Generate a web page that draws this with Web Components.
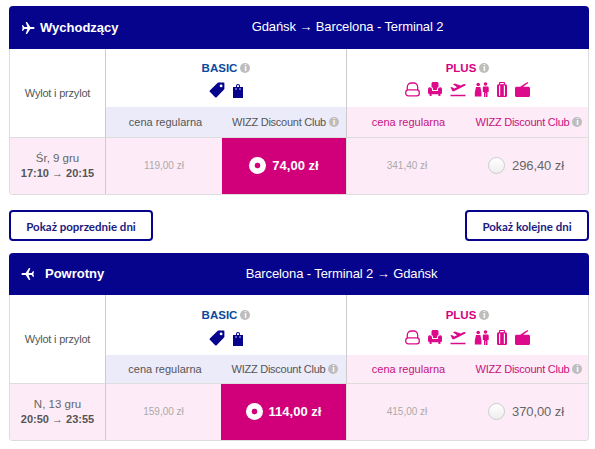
<!DOCTYPE html>
<html lang="pl">
<head>
<meta charset="utf-8">
<title>Wybór lotu</title>
<style>
  html, body { margin: 0; background: #fff; }
  body { font-family: "Liberation Sans", Arial, sans-serif; }
  main { display: flex; flex-direction: column; width: 580px; padding: 6px 0 0 9px; }
</style>
</head>
<body>
<main>
  <flight-card direction="out" label="Wychodzący" route="Gdańsk → Barcelona - Terminal 2"
    day="Śr, 9 gru" times="17:10 → 20:15"
    basic-reg="119,00 zł" basic-club="74,00 zł" plus-reg="341,40 zł" plus-club="296,40 zł"
    style="--head:43px; --plan:58px; --sub:31px; --reg:116px; --club:124px; --plan-pad:12px; --icon-top:7px; --route-pad:97px"></flight-card>
  <day-pager></day-pager>
  <flight-card direction="back" label="Powrotny" route="Barcelona - Terminal 2 → Gdańsk"
    day="N, 13 gru" times="20:50 → 23:55"
    basic-reg="159,00 zł" basic-club="114,00 zł" plus-reg="415,00 zł" plus-club="370,00 zł"
    style="--head:42px; --plan:60px; --sub:29px; --reg:115px; --club:125px; --plan-pad:13px; --icon-top:8px; --route-pad:85px"></flight-card>
</main>

<script>
const ICONS = {
  plane: [20, 20, '<path d="M19.5 10c0-1-1.2-1.6-2.6-1.6h-3.6L8.6 1.5H6.7l2.4 6.9H4.8L3 6H1.3l1 4-1 4H3l1.8-2.4h4.3l-2.4 6.9h1.9l4.7-6.9h3.6c1.4 0 2.6-.6 2.6-1.6z"/>'],
  tag: [16, 16, '<path fill-rule="evenodd" d="M9.5.6h5.2c.4 0 .7.3.7.7v5.2c0 .4-.1.7-.4 1l-7.4 7.7c-.4.4-1 .4-1.4 0L.8 9.8c-.4-.4-.4-1 0-1.4L8.5 1c.3-.3.6-.4 1-.4zm2.6 1.9a1.4 1.4 0 1 0 0 2.8 1.4 1.4 0 0 0 0-2.8z"/>'],
  bag: [10, 15, '<path fill-rule="evenodd" d="M3 4V3a2 2 0 0 1 4 0v1h3v11H0V4zM4 4h2V3a1 1 0 0 0-2 0zM2.5 5.2v1.6h1V5.2zm4 0v1.6h1V5.2z"/>'],
  seat: [15, 15, '<path fill="none" stroke="currentColor" stroke-width="1.3" d="M2.3 8V5.2C2.3 2.900 4 1 6.300 1h2.400c2.300 0 4 1.900 4 4.200V8"/><rect x=".7" y="7.800" width="13.600" height="6" rx="2.600" fill="none" stroke="currentColor" stroke-width="1.300"/>'],
  chair: [14, 15, '<path d="M3.5 1.5C3.5.7 4.2 0 5 0h4c.8 0 1.500.7 1.500 1.500V5c-.9.2-1.500 1-1.500 2v1H5V7c0-1-.6-1.800-1.500-2z"/><path d="M1.700 5.200C2.800 5.200 4 6 4 7.300V9h6V7.300c0-1.300 1.200-2.100 2.300-2.100S14 6 14 7.200v3.300c0 1-.7 1.700-1.600 1.700V14h-2v-1.800H3.600V14h-2v-1.800C.7 12.200 0 11.500 0 10.500V7.200C0 6 .7 5.200 1.700 5.200z"/>'],
  takeoff: [16, 15, '<path d="M.5 5.500l1.300-.6 2.500 1.500 2.700-1.200L3 2.300l1.700-.7 6 1.800 2.700-1.200c.8-.3 1.800-.3 2.100.3.2.6-.3 1.200-1.100 1.600L4 9.200c-.6.3-1.200.2-1.600-.2zM.5 12.800h15v1.400H.5z"/>'],
  people: [15, 15, '<circle cx="4.200" cy="2.500" r="1.800"/><circle cx="11.500" cy="2" r="1.800"/><path d="M2 5h4.400l1.100 5.400v4H.8v-4zM9.500 4.500h4c.7 0 1.200.5 1.200 1.200V10h-1.200v5h-1.500v-4h-.5v4H10v-5H8.800V5.700c0-.7.3-1.200.7-1.200z"/>'],
  suitcase: [10, 15, '<path fill-rule="evenodd" d="M3 0h4c.6 0 1 .4 1 1v1.300h.4c.9 0 1.600.7 1.600 1.600v9.500c0 .9-.7 1.600-1.600 1.600H1.600C.7 15 0 14.300 0 13.400V3.900c0-.9.7-1.600 1.600-1.600H2V1c0-.6.4-1 1-1zm.2 1v1.300h3.600V1zM2 3.500v10.300h1.200V3.500zm4.800 0v10.300H8V3.500z"/>'],
  handbag: [15, 15, '<path d="M1.500 4.700h3.700L10 1.600 12.800.1l.5.8L10.500 3 8 4.700h5.500c.8 0 1.500.7 1.500 1.500v7.300c0 .8-.7 1.500-1.500 1.500h-12C.7 15 0 14.300 0 13.500V6.200c0-.8.7-1.500 1.500-1.500z"/>'],
};

class FareIcon extends HTMLElement {
  constructor() {
    super();
    this.attachShadow({ mode: 'open' });
  }

  connectedCallback() {
    const [w, h, body] = ICONS[this.getAttribute('name')];
    const size = this.getAttribute('size');
    this.shadowRoot.innerHTML = `
      <style>
        :host { display: block; line-height: 0; }
        svg { display: block; width: ${size || w}px; height: ${size || h}px; fill: currentColor; }
      </style>
      <svg viewBox="0 0 ${w} ${h}" aria-hidden="true">${body}</svg>`;
  }
}

class InfoDot extends HTMLElement {
  constructor() {
    super();
    this.attachShadow({ mode: 'open' });
    this.shadowRoot.innerHTML = `
      <style>
        :host {
          display: inline-block;
          flex: none;
          width: 10px;
          height: 10px;
          border-radius: 50%;
          background: #bdbdbd;
          color: #fff;
          font: bold 9px/10px "Liberation Sans", Arial, sans-serif;
          letter-spacing: 0;
          text-align: center;
        }
      </style>i`;
  }
}

class PlanHead extends HTMLElement {
  constructor() {
    super();
    this.attachShadow({ mode: 'open' });
  }

  connectedCallback() {
    this.shadowRoot.innerHTML = `
      <style>
        :host {
          display: flex;
          flex-direction: column;
          align-items: center;
          background: #fff;
          color: var(--plan-color);
          padding-top: var(--plan-pad);
          box-sizing: border-box;
        }
        .name { font: bold 11.5px/14px "Liberation Sans", Arial, sans-serif; color: var(--name-color); display: flex; align-items: center; gap: 3px; }
        .icons { display: flex; align-items: center; gap: 8px; margin-top: var(--icon-top); }
      </style>
      <div class="name">${this.getAttribute('name')} <info-dot></info-dot></div>
      <div class="icons"><slot></slot></div>`;
  }
}

class FareCell extends HTMLElement {
  constructor() {
    super();
    this.attachShadow({ mode: 'open' });
  }

  connectedCallback() {
    const kind = this.getAttribute('kind');
    const radio = kind === 'price' ? '' : `<span class="radio"></span>`;
    this.shadowRoot.innerHTML = `
      <style>
        :host {
          display: flex;
          align-items: center;
          justify-content: center;
          gap: 7px;
          background: #fdecf7;
          font-family: "Liberation Sans", Arial, sans-serif;
          padding-bottom: 1px;
          box-sizing: border-box;
          height: 100%;
        }
        :host([kind="price"]) { font-size: 10px; color: #aaa; }
        :host([kind="option"]) { font-size: 13px; color: #666; padding-right: 3px; letter-spacing: -.1px; }
        :host([kind="selected"]) { background: #d1007a; color: #fff; font-size: 13px; font-weight: bold; gap: 6px; }
        .radio {
          width: 17px;
          height: 17px;
          border-radius: 50%;
          box-sizing: border-box;
          border: 1px solid #ccc;
          background: linear-gradient(#fff, #eee);
        }
        :host([kind="selected"]) .radio {
          border: 0;
          background: radial-gradient(circle, #d1007a 0 2.5px, #fff 3.2px);
        }
      </style>
      ${radio}<span><slot></slot></span>`;
  }
}

class FlightCard extends HTMLElement {
  constructor() {
    super();
    this.attachShadow({ mode: 'open' });
  }

  connectedCallback() {
    const a = (n) => this.getAttribute(n);
    const back = a('direction') === 'back';
    this.shadowRoot.innerHTML = `
      <style>
        :host {
          display: block;
          font-family: "Liberation Sans", Arial, sans-serif;
          color: #666;
        }
        .head {
          display: flex;
          align-items: center;
          position: relative;
          height: var(--head);
          background: #06038d;
          color: #fff;
          border-radius: 4px 4px 0 0;
        }
        .dir {
          display: flex;
          align-items: center;
          margin-left: 12px;
          font: bold 13px/16px "Liberation Sans", Arial, sans-serif;
          white-space: nowrap;
        }
        .dir fare-icon { margin-right: ${back ? '10px' : '5px'}; ${back ? 'transform: scaleX(-1);' : ''} }
        .route { position: absolute; left: 0; right: 0; text-align: center; font-size: 13px; letter-spacing: -.1px; padding-left: var(--route-pad); padding-bottom: 2px; }
        .body {
          display: grid;
          grid-template-columns: 96px var(--reg) var(--club) 1fr 1fr;
          grid-template-rows: var(--plan) var(--sub) 56px;
          border: 1px solid #ddd;
          border-top: 0;
          border-radius: 0 0 4px 4px;
          overflow: hidden;
        }
        .side {
          grid-row: span 2;
          display: flex;
          align-items: center;
          justify-content: center;
          font-size: 11px;
          letter-spacing: -.2px;
          color: #555;
          border-right: 1px solid #ccc;
          padding-bottom: 1px;
        }
        plan-head { grid-column: span 2; }
        .basic { --plan-color: #06038d; --name-color: #0a4a9c; }
        .plus { --plan-color: #dd0a8c; --name-color: #d6007f; border-left: 1px solid #ccc; }
        .sub {
          display: flex;
          align-items: center;
          justify-content: center;
          gap: 3px;
          font-size: 11px;
          white-space: nowrap;
          padding: 0 0 1px 3px;
          border-bottom: 1px solid #ddd;
        }
        .club { letter-spacing: -.25px; }
        .lav { background: #ecebfa; color: #555; }
        .rose { background: #fdecf7; color: #c8107f; }
        .edge { border-left: 1px solid #ccc; }
        .when {
          display: flex;
          flex-direction: column;
          justify-content: center;
          align-items: center;
          background: #fdecf7;
          font-size: 11.5px;
          line-height: 15px;
          padding-bottom: 1px;
          border-right: 1px solid #ccc;
          border-top: 1px solid #ddd;
          margin-top: -1px;
        }
        .when b { color: #555; font-size: 11px; }
      </style>
      <div class="head">
        <div class="dir"><fare-icon name="plane" size="14"></fare-icon>${a('label')}</div>
        <div class="route">${a('route')}</div>
      </div>
      <div class="body">
        <div class="side">Wylot i przylot</div>
        <plan-head class="basic" name="BASIC">
          <fare-icon name="tag"></fare-icon><fare-icon name="bag"></fare-icon>
        </plan-head>
        <plan-head class="plus" name="PLUS">
          <fare-icon name="seat"></fare-icon><fare-icon name="chair"></fare-icon>
          <fare-icon name="takeoff"></fare-icon><fare-icon name="people"></fare-icon>
          <fare-icon name="suitcase"></fare-icon><fare-icon name="handbag"></fare-icon>
        </plan-head>
        <div class="sub lav">cena regularna</div>
        <div class="sub lav club">WIZZ Discount Club <info-dot></info-dot></div>
        <div class="sub rose edge">cena regularna</div>
        <div class="sub rose club">WIZZ Discount Club <info-dot></info-dot></div>
        <div class="when"><span>${a('day')}</span><b>${a('times')}</b></div>
        <fare-cell kind="price">${a('basic-reg')}</fare-cell>
        <fare-cell kind="selected">${a('basic-club')}</fare-cell>
        <fare-cell kind="price" style="border-left:1px solid #ddd">${a('plus-reg')}</fare-cell>
        <fare-cell kind="option">${a('plus-club')}</fare-cell>
      </div>`;
  }
}

class DayPager extends HTMLElement {
  constructor() {
    super();
    this.attachShadow({ mode: 'open' });
    this.shadowRoot.innerHTML = `
      <style>
        :host {
          display: flex;
          justify-content: space-between;
          margin: 15px 0 12px;
        }
        button {
          height: 31px;
          box-sizing: border-box;
          background: #fff;
          border: 2px solid #06038d;
          border-radius: 4px;
          color: #1c1a7e;
          font: bold 11.5px Lato, sans-serif;
          padding: 1px 0 0;
        }
        .prev { width: 144px; }
        .next { width: 124px; }
      </style>
      <button class="prev">Pokaż poprzednie dni</button>
      <button class="next">Pokaż kolejne dni</button>`;
  }
}

customElements.define('fare-icon', FareIcon);
customElements.define('info-dot', InfoDot);
customElements.define('plan-head', PlanHead);
customElements.define('fare-cell', FareCell);
customElements.define('flight-card', FlightCard);
customElements.define('day-pager', DayPager);
</script>
</body>
</html>
